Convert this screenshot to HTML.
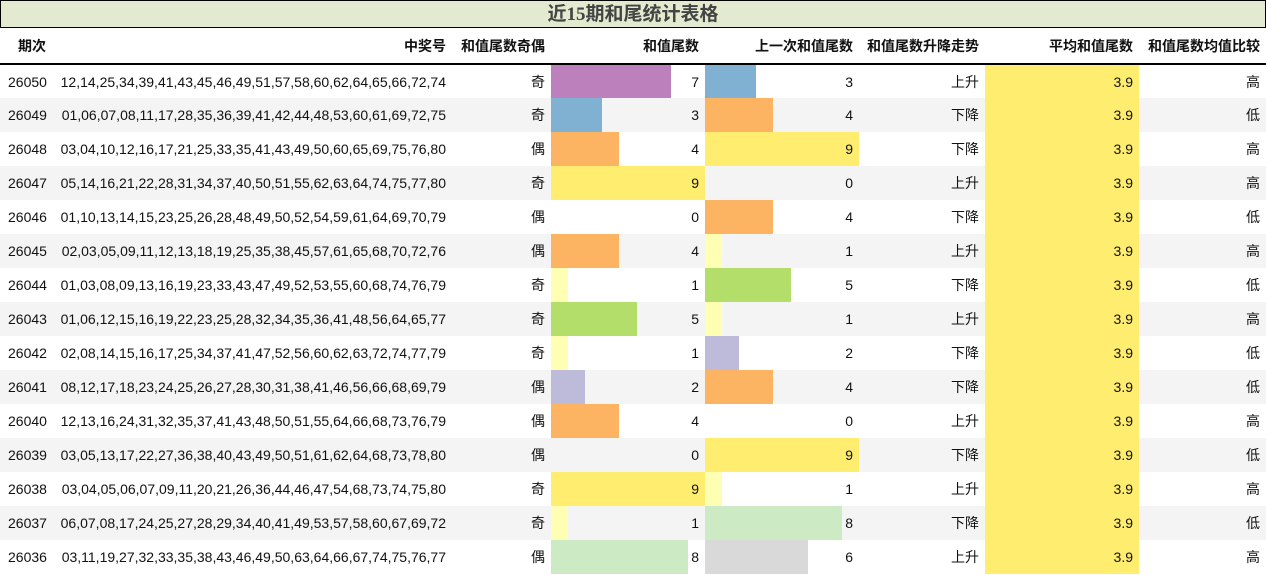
<!DOCTYPE html>
<html><head><meta charset="utf-8"><style>
*{margin:0;padding:0;box-sizing:border-box}
body{width:1266px;height:575px;background:#fff;font-family:"Liberation Sans","Noto Sans CJK SC",sans-serif;font-size:14px;color:#111;overflow:hidden}
.title{height:28px;background:#e2ebd0;border:1px solid #000;text-align:center;font-weight:bold;font-size:19px;color:#444;line-height:27px;font-family:"Liberation Serif","Noto Sans CJK SC",serif}
table{border-collapse:collapse;table-layout:fixed;width:1266px}
th{height:36px;font-weight:bold;text-align:right;padding-right:6px;border-bottom:2px solid #000;font-size:14px}
th.l{text-align:left;padding-left:18px}
td{height:34px;text-align:right;padding-right:6px;position:relative;white-space:nowrap;overflow:visible}
td.l{text-align:left;padding-left:8px}
tr:nth-child(odd) td{background:#f4f4f4}
td.b{padding:0}
td.b i{position:absolute;left:0;top:0;bottom:0}
td.b span{position:relative;display:block;text-align:right;padding-right:6px}
tr td.avg{background:#ffed6f}
.c0{width:0}.c1{width:17px;background:#ffffb3}.c2{width:34px;background:#bebada}.c3{width:51px;background:#80b1d3}.c4{width:68px;background:#fdb462}.c5{width:86px;background:#b3de69}.c6{width:103px;background:#d9d9d9}.c7{width:120px;background:#bc80bd}.c8{width:137px;background:#ccebc5}.c9{width:154px;background:#ffed6f}
</style></head><body>
<div class="title">近15期和尾统计表格</div>
<table>
<colgroup><col style="width:52px"><col style="width:400px"><col style="width:99px"><col style="width:154px"><col style="width:154px"><col style="width:126px"><col style="width:154px"><col style="width:127px"></colgroup>
<tr><th class="l">期次</th><th>中奖号</th><th>和值尾数奇偶</th><th>和值尾数</th><th>上一次和值尾数</th><th>和值尾数升降走势</th><th>平均和值尾数</th><th>和值尾数均值比较</th></tr>
<tr><td class="l">26050</td><td>12,14,25,34,39,41,43,45,46,49,51,57,58,60,62,64,65,66,72,74</td><td>奇</td><td class="b"><i class="c7"></i><span>7</span></td><td class="b"><i class="c3"></i><span>3</span></td><td>上升</td><td class="avg">3.9</td><td>高</td></tr>
<tr><td class="l">26049</td><td>01,06,07,08,11,17,28,35,36,39,41,42,44,48,53,60,61,69,72,75</td><td>奇</td><td class="b"><i class="c3"></i><span>3</span></td><td class="b"><i class="c4"></i><span>4</span></td><td>下降</td><td class="avg">3.9</td><td>低</td></tr>
<tr><td class="l">26048</td><td>03,04,10,12,16,17,21,25,33,35,41,43,49,50,60,65,69,75,76,80</td><td>偶</td><td class="b"><i class="c4"></i><span>4</span></td><td class="b"><i class="c9"></i><span>9</span></td><td>下降</td><td class="avg">3.9</td><td>高</td></tr>
<tr><td class="l">26047</td><td>05,14,16,21,22,28,31,34,37,40,50,51,55,62,63,64,74,75,77,80</td><td>奇</td><td class="b"><i class="c9"></i><span>9</span></td><td class="b"><i class="c0"></i><span>0</span></td><td>上升</td><td class="avg">3.9</td><td>高</td></tr>
<tr><td class="l">26046</td><td>01,10,13,14,15,23,25,26,28,48,49,50,52,54,59,61,64,69,70,79</td><td>偶</td><td class="b"><i class="c0"></i><span>0</span></td><td class="b"><i class="c4"></i><span>4</span></td><td>下降</td><td class="avg">3.9</td><td>低</td></tr>
<tr><td class="l">26045</td><td>02,03,05,09,11,12,13,18,19,25,35,38,45,57,61,65,68,70,72,76</td><td>偶</td><td class="b"><i class="c4"></i><span>4</span></td><td class="b"><i class="c1"></i><span>1</span></td><td>上升</td><td class="avg">3.9</td><td>高</td></tr>
<tr><td class="l">26044</td><td>01,03,08,09,13,16,19,23,33,43,47,49,52,53,55,60,68,74,76,79</td><td>奇</td><td class="b"><i class="c1"></i><span>1</span></td><td class="b"><i class="c5"></i><span>5</span></td><td>下降</td><td class="avg">3.9</td><td>低</td></tr>
<tr><td class="l">26043</td><td>01,06,12,15,16,19,22,23,25,28,32,34,35,36,41,48,56,64,65,77</td><td>奇</td><td class="b"><i class="c5"></i><span>5</span></td><td class="b"><i class="c1"></i><span>1</span></td><td>上升</td><td class="avg">3.9</td><td>高</td></tr>
<tr><td class="l">26042</td><td>02,08,14,15,16,17,25,34,37,41,47,52,56,60,62,63,72,74,77,79</td><td>奇</td><td class="b"><i class="c1"></i><span>1</span></td><td class="b"><i class="c2"></i><span>2</span></td><td>下降</td><td class="avg">3.9</td><td>低</td></tr>
<tr><td class="l">26041</td><td>08,12,17,18,23,24,25,26,27,28,30,31,38,41,46,56,66,68,69,79</td><td>偶</td><td class="b"><i class="c2"></i><span>2</span></td><td class="b"><i class="c4"></i><span>4</span></td><td>下降</td><td class="avg">3.9</td><td>低</td></tr>
<tr><td class="l">26040</td><td>12,13,16,24,31,32,35,37,41,43,48,50,51,55,64,66,68,73,76,79</td><td>偶</td><td class="b"><i class="c4"></i><span>4</span></td><td class="b"><i class="c0"></i><span>0</span></td><td>上升</td><td class="avg">3.9</td><td>高</td></tr>
<tr><td class="l">26039</td><td>03,05,13,17,22,27,36,38,40,43,49,50,51,61,62,64,68,73,78,80</td><td>偶</td><td class="b"><i class="c0"></i><span>0</span></td><td class="b"><i class="c9"></i><span>9</span></td><td>下降</td><td class="avg">3.9</td><td>低</td></tr>
<tr><td class="l">26038</td><td>03,04,05,06,07,09,11,20,21,26,36,44,46,47,54,68,73,74,75,80</td><td>奇</td><td class="b"><i class="c9"></i><span>9</span></td><td class="b"><i class="c1"></i><span>1</span></td><td>上升</td><td class="avg">3.9</td><td>高</td></tr>
<tr><td class="l">26037</td><td>06,07,08,17,24,25,27,28,29,34,40,41,49,53,57,58,60,67,69,72</td><td>奇</td><td class="b"><i class="c1"></i><span>1</span></td><td class="b"><i class="c8"></i><span>8</span></td><td>下降</td><td class="avg">3.9</td><td>低</td></tr>
<tr><td class="l">26036</td><td>03,11,19,27,32,33,35,38,43,46,49,50,63,64,66,67,74,75,76,77</td><td>偶</td><td class="b"><i class="c8"></i><span>8</span></td><td class="b"><i class="c6"></i><span>6</span></td><td>上升</td><td class="avg">3.9</td><td>高</td></tr>
</table>
</body></html>
